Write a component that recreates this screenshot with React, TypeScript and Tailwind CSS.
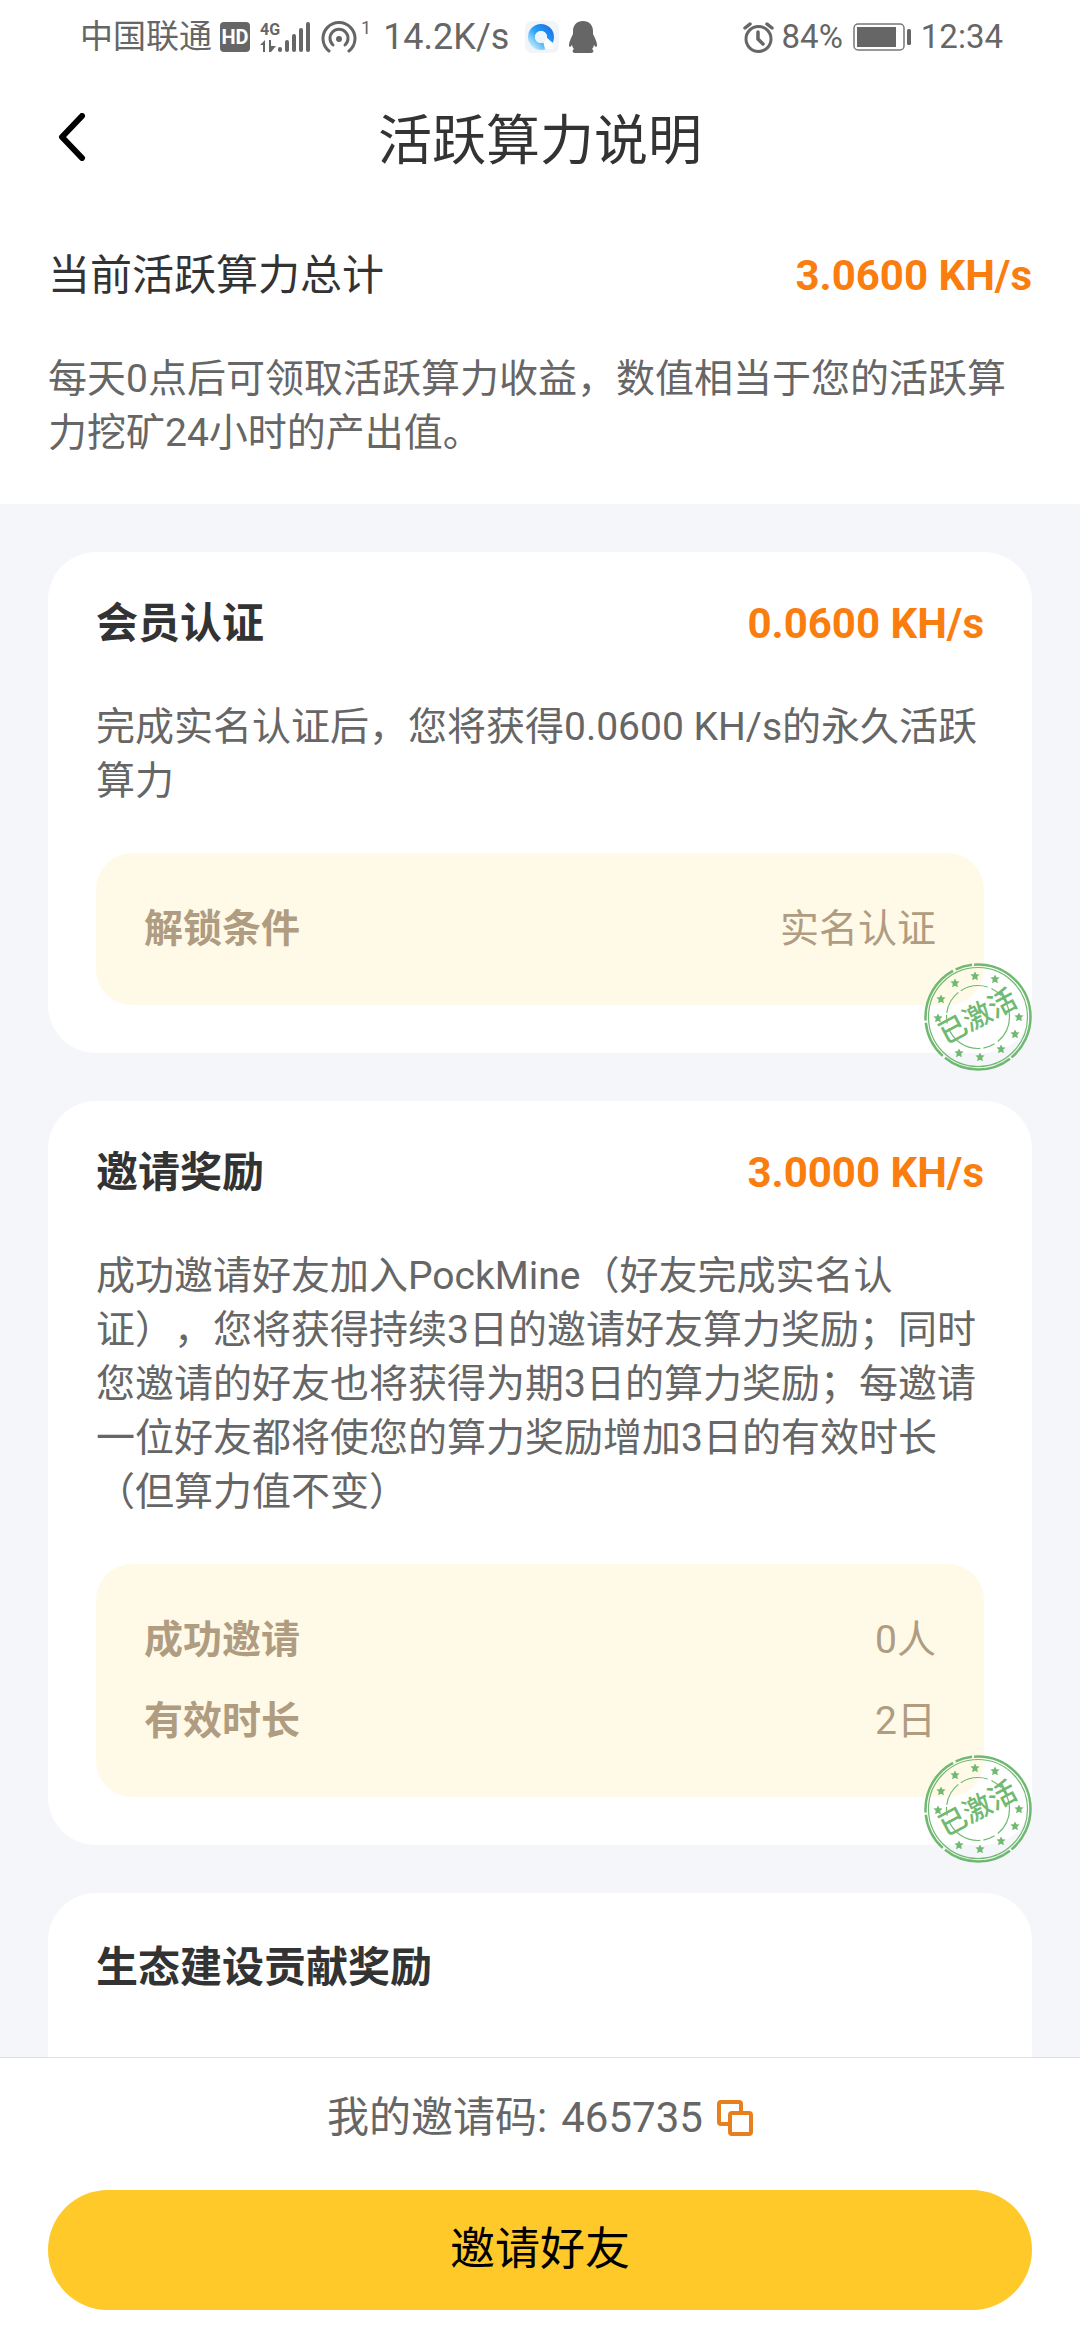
import React from 'react';

interface InfoRow {
  label: string;
  value: string;
}

interface RewardCardProps {
  title: string;
  value?: string;
  desc?: string;
  rows?: InfoRow[];
  activated?: boolean;
}

const CARDS: RewardCardProps[] = [
  {
    title: '会员认证',
    value: '0.0600 KH/s',
    desc: '完成实名认证后，您将获得0.0600 KH/s的永久活跃算力',
    rows: [{ label: '解锁条件', value: '实名认证' }],
    activated: true,
  },
  {
    title: '邀请奖励',
    value: '3.0000 KH/s',
    desc: '成功邀请好友加入PockMine（好友完成实名认证），您将获得持续3日的邀请好友算力奖励；同时您邀请的好友也将获得为期3日的算力奖励；每邀请一位好友都将使您的算力奖励增加3日的有效时长（但算力值不变）',
    rows: [
      { label: '成功邀请', value: '0人' },
      { label: '有效时长', value: '2日' },
    ],
    activated: true,
  },
  { title: '生态建设贡献奖励' },
];

// star positions on the stamp ring, in the 108x108 box
const STARS = [
  [51, 13], [71, 16], [31, 20], [17, 36], [14, 55],
  [95, 54], [91, 71], [77, 86], [56, 94], [35, 90],
];

const SignalIcon = () => (
  <svg className="h-8 w-[51px]" viewBox="0 0 51 32" fill="#666" aria-hidden="true">
    <text x="0" y="14" fontFamily="Roboto, sans-serif" fontSize="16" fontWeight="700">4G</text>
    <path d="M0 24l5-5v12H3v-7zM9 19h2v6l5 0-5 6H9z" />
    <rect x="18" y="26" width="4" height="5" rx="2" />
    <rect x="25" y="19" width="4" height="12" rx="2" />
    <rect x="32" y="13" width="4" height="18" rx="2" />
    <rect x="39" y="7" width="4" height="24" rx="2" />
    <rect x="46" y="1" width="4" height="30" rx="2" />
  </svg>
);

const HotspotIcon = () => (
  <svg className="h-8 w-9" viewBox="0 0 36 32" fill="none" stroke="#666" strokeWidth="3" strokeLinecap="round" aria-hidden="true">
    <path d="M8 30a16 16 0 1 1 20 0" />
    <path d="M12 24a9 9 0 1 1 12 0" />
    <circle cx="18" cy="18" r="3" fill="#666" stroke="none" />
  </svg>
);

const BrowserIcon = () => (
  <svg className="h-8 w-[34px]" viewBox="0 0 34 32" aria-hidden="true">
    <defs>
      <linearGradient id="q" x1="1" y1="0" x2="0" y2="1">
        <stop offset="0" stopColor="#1a73e8" />
        <stop offset="0.5" stopColor="#2aa3f5" />
        <stop offset="1" stopColor="#bfe9fd" />
      </linearGradient>
    </defs>
    <rect width="34" height="32" rx="7" fill="#f1f4f8" />
    <circle cx="16" cy="16" r="9.5" fill="none" stroke="url(#q)" strokeWidth="7" />
    <path d="M17 16l5 1 7 6-1 5h-8z" fill="#fff" />
    <circle cx="16" cy="16" r="6" fill="#eef6fd" />
  </svg>
);

const PenguinIcon = () => (
  <svg className="h-[34px] w-7" viewBox="0 0 28 34" fill="#666" aria-hidden="true">
    <path d="M14 1c6 0 10 4 10 10v3c2 4 4 8 4 11 0 2-1 3-3 0-.5 2-1 3-2 4 2 1 2 4-1 4H6c-3 0-3-3-1-4-1-1-1.500-2-2-4-2 3-3 2-3 0 0-3 2-7 4-11v-3C4 5 8 1 14 1z" />
  </svg>
);

const AlarmIcon = () => (
  <svg className="h-8 w-[31px]" viewBox="0 0 31 32" fill="none" stroke="#666" strokeWidth="3" strokeLinecap="round" aria-hidden="true">
    <circle cx="15.500" cy="18" r="12.500" />
    <path d="M15 11v7l5 5" strokeWidth="3.500" />
    <path d="M2 7l5-4M29 7l-5-4" strokeWidth="3.500" />
  </svg>
);

const BatteryIcon = () => (
  <svg className="h-7 w-[58px]" viewBox="0 0 58 28" aria-hidden="true">
    <rect x="1" y="1" width="50" height="26" rx="4" fill="none" stroke="#777" strokeWidth="1.500" />
    <rect x="4" y="4" width="39" height="20" fill="#666" />
    <rect x="54" y="6" width="4" height="16" rx="1.500" fill="#666" />
  </svg>
);

const CopyIcon = () => (
  <svg className="h-9 w-9" viewBox="0 0 36 36" fill="none" stroke="#e87f1e" strokeWidth="4" strokeLinejoin="round" aria-hidden="true">
    <path d="M12 24H4a2 2 0 0 1-2-2V4a2 2 0 0 1 2-2h18a2 2 0 0 1 2 2v8" />
    <rect x="13" y="13" width="21" height="21" rx="2" />
  </svg>
);

const ActivatedStamp = () => (
  <svg className="absolute right-0 -bottom-[18px] h-27 w-27" viewBox="0 0 108 108" fill="none" stroke="#6fb971" role="img" aria-label="已激活">
    <circle cx="54" cy="54" r="52.500" strokeWidth="2.500" strokeDasharray="46 2 70 3 38 2 60 3 17 2 88 2" />
    <circle cx="54" cy="54" r="49.500" strokeWidth="1.200" />
    <circle cx="54" cy="54" r="31.500" strokeWidth="1.200" strokeDasharray="28 4 12 3 40 5 9 2 24 3" />
    <g fill="#6fb971" stroke="none">
      {STARS.map(([x, y]) => (
        <path
          key={`${x}-${y}`}
          transform={`translate(${x} ${y})`}
          d="M0-4.500l1.400 2.700 3.200.4-2.400 2.200.7 3.400L0 2.800-2.900 4.200l.7-3.400-2.400-2.200 3.200-.4z"
        />
      ))}
    </g>
    <text
      x="54"
      y="63"
      transform="rotate(-28 54 54)"
      textAnchor="middle"
      fontFamily="'Noto Sans CJK SC', sans-serif"
      fontSize="28"
      fontWeight="500"
      fill="#6fb971"
      stroke="none"
    >
      已激活
    </text>
  </svg>
);

const StatusBar = () => (
  <div className="flex h-[74px] items-center justify-between pr-[77px] pl-20 text-[33px] text-[#666]">
    <div className="flex items-center">
      <span>中国联通</span>
      <span className="ml-2 flex h-[30px] w-[30px] items-center justify-center rounded bg-[#666] text-[20px] font-bold text-white">
        HD
      </span>
      <span className="ml-2.5 flex"><SignalIcon /></span>
      <span className="ml-2.5 flex"><HotspotIcon /></span>
      <span className="ml-1 -mt-5 text-[18px]">1</span>
      <span className="ml-3 text-[36px]">14.2K/s</span>
      <span className="ml-4 flex items-center gap-2.5">
        <BrowserIcon />
        <PenguinIcon />
      </span>
    </div>
    <div className="flex items-center">
      <AlarmIcon />
      <span className="ml-2">84%</span>
      <span className="ml-2.5 flex"><BatteryIcon /></span>
      <span className="ml-2.5">12:34</span>
    </div>
  </div>
);

const RewardCard: React.FC<RewardCardProps> = ({ title, value, desc, rows, activated }) => (
  <section className="relative min-h-60 rounded-[48px] bg-white p-12">
    <div className={`flex items-center justify-between text-[42px] font-bold ${value ? 'leading-[48px]' : 'leading-[54px]'}`}>
      <h2 className="text-[#333]">{title}</h2>
      {value && <span className="text-[#fa7d0f]">{value}</span>}
    </div>
    {desc && <p className="mt-[52px] text-[39px] leading-[54px] text-[#666]">{desc}</p>}
    {rows && (
      <dl className="mt-[45px] flex flex-col gap-[25px] rounded-[36px] bg-[#fff9e8] p-12 text-[39px] leading-[56px] text-[#b09c80]">
        {rows.map((r) => (
          <div key={r.label} className="flex justify-between">
            <dt className="font-bold">{r.label}</dt>
            <dd>{r.value}</dd>
          </div>
        ))}
      </dl>
    )}
    {activated && <ActivatedStamp />}
  </section>
);

export default function App() {
  return (
    <div className="flex h-screen flex-col bg-white font-[Roboto,'Noto_Sans_CJK_SC',sans-serif] [text-spacing-trim:space-all]">
      <StatusBar />
      <header className="grid h-[134px] grid-cols-[1fr_auto_1fr] items-center px-12">
        <button type="button" aria-label="返回" className="flex h-16 w-12 items-start pt-1 pl-1.5">
          <svg className="h-12 w-8" viewBox="0 0 32 48" fill="none" stroke="#000" strokeWidth="6" strokeLinecap="round" strokeLinejoin="round">
            <path d="M28 3L8 24l20 21" />
          </svg>
        </button>
        <h1 className="text-[54px] text-[#333]">活跃算力说明</h1>
      </header>

      <main className="min-h-0 flex-1 overflow-y-auto bg-[#f5f6fa] [scrollbar-width:none]">
        <section className="bg-white px-12 py-11">
          <div className="flex items-center justify-between text-[42px] leading-[48px]">
            <h2 className="text-[#333]">当前活跃算力总计</h2>
            <span className="font-bold text-[#fa7d0f]">3.0600 KH/s</span>
          </div>
          <p className="mt-[52px] text-[39px] leading-[54px] text-[#666]">
            每天0点后可领取活跃算力收益，数值相当于您的活跃算力挖矿24小时的产出值。
          </p>
        </section>
        <div className="flex flex-col gap-12 p-12">
          {CARDS.map((card) => (
            <RewardCard key={card.title} {...card} />
          ))}
        </div>
      </main>

      <footer className="border-t border-[#e0e0e0] bg-white px-12 pt-8 pb-[30px]">
        <div className="flex items-center justify-center gap-3.5 text-[42px] leading-[56px] text-[#666]">
          <span>我的邀请码:</span>
          <span>465735</span>
          <button type="button" aria-label="复制邀请码" className="flex">
            <CopyIcon />
          </button>
        </div>
        <button type="button" className="mt-11 h-30 w-full rounded-full bg-[#ffc929] text-[45px] text-black">
          邀请好友
        </button>
      </footer>
    </div>
  );
}
